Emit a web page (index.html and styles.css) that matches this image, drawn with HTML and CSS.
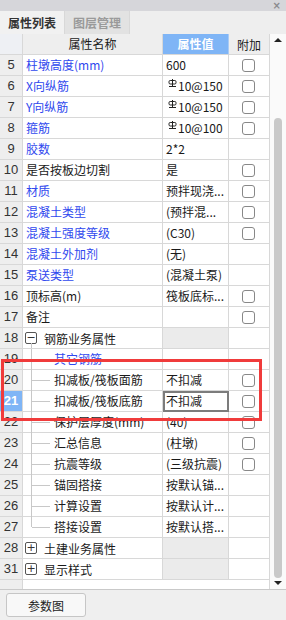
FILE: index.html
```html
<!DOCTYPE html>
<html lang="zh">
<head>
  <meta charset="UTF-8" />
  <title>属性列表</title>
  <link rel="stylesheet" href="styles.css">
</head>
<body>
  <div class="titlebar"><span class="close">×</span></div>
  <div class="tabs">
    <div class="tab active">属性列表</div>
    <div class="tab">图层管理</div>
  </div>

  <div class="panel">
    <div class="grid">
      <div class="row head">
        <div class="num"></div>
        <div class="name">属性名称</div>
        <div class="val">属性值</div>
        <div class="add">附加</div>
      </div>

      <div class="row"><div class="num">5</div><div class="name link">柱墩高度(mm)</div><div class="val">600</div><div class="add"><span class="chk"></span></div></div>
      <div class="row"><div class="num">6</div><div class="name link">X向纵筋</div><div class="val"><svg class="bar" width="9" height="8" viewBox="0 0 9 8"><rect x="1" y="1.5" width="7" height="3.5" rx="1.2" fill="none" stroke="#222" stroke-width="1"/><path d="M4.5 0v7M1 7.5h7" stroke="#222" stroke-width="1"/></svg>10@150</div><div class="add"><span class="chk"></span></div></div>
      <div class="row"><div class="num">7</div><div class="name link">Y向纵筋</div><div class="val"><svg class="bar" width="9" height="8" viewBox="0 0 9 8"><rect x="1" y="1.5" width="7" height="3.5" rx="1.2" fill="none" stroke="#222" stroke-width="1"/><path d="M4.5 0v7M1 7.5h7" stroke="#222" stroke-width="1"/></svg>10@150</div><div class="add"><span class="chk"></span></div></div>
      <div class="row"><div class="num">8</div><div class="name link">箍筋</div><div class="val"><svg class="bar" width="9" height="8" viewBox="0 0 9 8"><rect x="1" y="1.5" width="7" height="3.5" rx="1.2" fill="none" stroke="#222" stroke-width="1"/><path d="M4.5 0v7M1 7.5h7" stroke="#222" stroke-width="1"/></svg>10@100</div><div class="add"><span class="chk"></span></div></div>
      <div class="row"><div class="num">9</div><div class="name link">胶数</div><div class="val">2*2</div><div class="add"></div></div>
      <div class="row"><div class="num">10</div><div class="name">是否按板边切割</div><div class="val">是</div><div class="add"><span class="chk"></span></div></div>
      <div class="row"><div class="num">11</div><div class="name link">材质</div><div class="val">预拌现浇...</div><div class="add"><span class="chk"></span></div></div>
      <div class="row"><div class="num">12</div><div class="name link">混凝土类型</div><div class="val">(预拌混...</div><div class="add"><span class="chk"></span></div></div>
      <div class="row"><div class="num">13</div><div class="name link">混凝土强度等级</div><div class="val">(C30)</div><div class="add"><span class="chk"></span></div></div>
      <div class="row"><div class="num">14</div><div class="name link">混凝土外加剂</div><div class="val">(无)</div><div class="add"></div></div>
      <div class="row"><div class="num">15</div><div class="name link">泵送类型</div><div class="val">(混凝土泵)</div><div class="add"></div></div>
      <div class="row"><div class="num">16</div><div class="name">顶标高(m)</div><div class="val">筏板底标...</div><div class="add"><span class="chk"></span></div></div>
      <div class="row"><div class="num">17</div><div class="name">备注</div><div class="val"></div><div class="add"><span class="chk"></span></div></div>
      <div class="row"><div class="num">18</div><div class="name group open"><span class="tog">−</span>钢筋业务属性</div><div class="val grey"></div><div class="add"></div></div>
      <div class="row"><div class="num">19</div><div class="name child link">其它钢筋</div><div class="val"></div><div class="add"></div></div>
      <div class="row"><div class="num">20</div><div class="name child">扣减板/筏板面筋</div><div class="val">不扣减</div><div class="add"><span class="chk"></span></div></div>
      <div class="row"><div class="num sel">21</div><div class="name child">扣减板/筏板底筋</div><div class="val edit">不扣减</div><div class="add"><span class="chk"></span></div></div>
      <div class="row"><div class="num">22</div><div class="name child">保护层厚度(mm)</div><div class="val">(40)</div><div class="add"><span class="chk"></span></div></div>
      <div class="row"><div class="num">23</div><div class="name child">汇总信息</div><div class="val">(柱墩)</div><div class="add"><span class="chk"></span></div></div>
      <div class="row"><div class="num">24</div><div class="name child">抗震等级</div><div class="val">(三级抗震)</div><div class="add"><span class="chk"></span></div></div>
      <div class="row"><div class="num">25</div><div class="name child">锚固搭接</div><div class="val">按默认锚...</div><div class="add"></div></div>
      <div class="row"><div class="num">26</div><div class="name child">计算设置</div><div class="val">按默认计...</div><div class="add"></div></div>
      <div class="row"><div class="num">27</div><div class="name child last">搭接设置</div><div class="val">按默认搭...</div><div class="add"></div></div>
      <div class="row"><div class="num">28</div><div class="name group"><span class="tog">+</span>土建业务属性</div><div class="val grey"></div><div class="add"></div></div>
      <div class="row"><div class="num">31</div><div class="name group"><span class="tog">+</span>显示样式</div><div class="val grey"></div><div class="add"></div></div>
      <div class="filler"><div class="num"></div><div class="rest"></div></div>
    </div>

    <div class="scroll">
      <span class="arrow up"></span>
      <div class="thumb"></div>
      <span class="arrow down"></span>
    </div>

    <div class="mark"></div>
  </div>

  <div class="footer">
    <button class="btn">参数图</button>
  </div>
</body>
</html>
```

FILE: styles.css
```css
body {
  margin: 0;
  width: 286px;
  height: 620px;
  background: #efefef;
  font-family: "Noto Sans CJK SC", "Liberation Sans", sans-serif;
  font-size: 12px;
  color: #1a1a1a;
  overflow: hidden;
}
.titlebar {
  height: 11px;
  background: #d6d6da;
  display: flex;
  justify-content: flex-end;
  align-items: center;
  padding-right: 5px;
}
.close {
  font-family: "DejaVu Sans", sans-serif;
  font-size: 10px;
  line-height: 11px;
  font-weight: bold;
  color: #8a8a8e;
}
.tabs {
  height: 23px;
  display: flex;
  background: #eeeeee;
}
.tab {
  padding: 0 8px;
  line-height: 23px;
  font-size: 12px;
  font-weight: bold;
  color: #9a9a9a;
  background: #e2e2e2;
  border-right: 1px solid #d8d8d8;
}
.tab.active {
  color: #333;
  background: #f1f1f1;
}
.panel {
  position: relative;
  display: flex;
  height: 555px;
  border-bottom: 1px solid #c9c9c9;
  background: #fff;
}
.grid {
  width: 270px;
  display: flex;
  flex-direction: column;
}
.row {
  display: grid;
  grid-template-columns: 23px 140px 66px 41px;
  height: 21px;
}
.row > div {
  box-sizing: border-box;
  border-right: 1px solid #d8d8d8;
  border-bottom: 1px solid #d8d8d8;
  line-height: 19px;
  white-space: nowrap;
  overflow: hidden;
}
.num {
  background: #eeeeee;
  text-align: center;
  font-family: "Liberation Sans", sans-serif;
  font-size: 13px;
  color: #333;
}
.num.sel {
  background: #7fb5f6;
  color: #fff;
  font-weight: bold;
}
.name {
  padding-left: 3px;
  position: relative;
}
.link {
  color: #3048ee;
}
.val {
  padding-left: 3px;
}
.val.grey {
  background: #ebebeb;
}
.val.edit {
  border: 2px solid #7c7c7c !important;
  padding-left: 1px;
  line-height: 16px !important;
}
.bar {
  vertical-align: 4px;
  margin: 0 1px 0 2px;
}
.add {
  display: flex;
  align-items: center;
  justify-content: center;
}
.chk {
  width: 11px;
  height: 11px;
  border: 1px solid #888;
  border-radius: 3px;
  background: #fff;
  margin-right: 1px;
}

.head > div {
  background: #eeeeee;
  text-align: center;
  padding: 0;
}
.head .num {
  background: #eef0f4;
}
.head .val {
  background: #7fb5f6;
  color: #fff;
  font-weight: bold;
  border-right-color: #a9cbf5;
}

.group {
  display: flex;
  align-items: center;
  padding-left: 2px;
}
.tog {
  box-sizing: border-box;
  width: 12px;
  height: 12px;
  border: 1px solid #555;
  border-radius: 2px;
  margin-right: 7px;
  font-family: "DejaVu Sans", sans-serif;
  font-size: 11px;
  line-height: 9px;
  text-align: center;
  color: #333;
}
.group.open::after {
  content: "";
  position: absolute;
  left: 8px;
  top: 15px;
  bottom: -1px;
  border-left: 1px solid #c8c8c8;
}
.child {
  padding-left: 31px;
  overflow: visible !important;
}
.child::before {
  content: "";
  position: absolute;
  left: 8px;
  top: 0;
  bottom: -1px;
  border-left: 1px solid #c8c8c8;
}
.child.last::before {
  bottom: 10px;
}
.child::after {
  content: "";
  position: absolute;
  left: 9px;
  top: 10px;
  width: 18px;
  border-top: 1px solid #c8c8c8;
}

.filler {
  flex: 1;
  display: flex;
}
.filler .num {
  width: 22px;
  border-right: 1px solid #d8d8d8;
}
.filler .rest {
  flex: 1;
  border-right: 1px solid #d8d8d8;
}

.scroll {
  width: 16px;
  background: #fafafa;
  display: flex;
  flex-direction: column;
  align-items: center;
}
.arrow {
  width: 0;
  height: 0;
  border-left: 4px solid transparent;
  border-right: 4px solid transparent;
}
.arrow.up {
  border-bottom: 4px solid #222;
  margin-top: 4px;
}
.arrow.down {
  border-top: 4px solid #222;
  margin-top: 3px;
}
.thumb {
  width: 8px;
  margin-top: 76px;
  height: 460px;
  border-radius: 4px;
  background: #c9c9c9;
}

.mark {
  position: absolute;
  left: 1px;
  top: 325px;
  width: 261px;
  height: 62px;
  box-sizing: border-box;
  border: 3px solid #f03b3b;
}

.footer {
  height: 30px;
  padding: 3px 6px;
  box-sizing: border-box;
}
.btn {
  width: 80px;
  height: 24px;
  border: 1px solid #c6c6c6;
  border-radius: 3px;
  background: #f8f8f8;
  font-family: "Noto Sans CJK SC", sans-serif;
  font-size: 12px;
  color: #222;
  padding: 0;
}
```
